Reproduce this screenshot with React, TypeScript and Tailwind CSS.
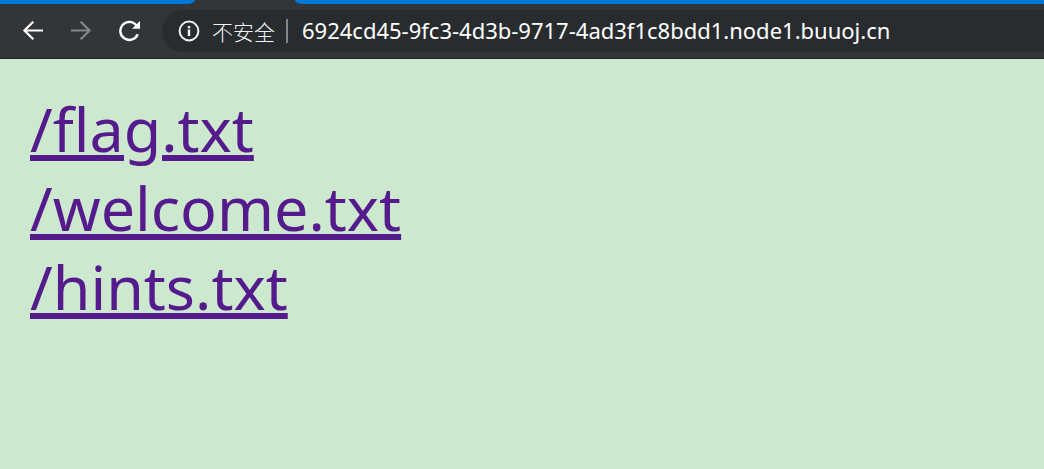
const files = ["/flag.txt", "/welcome.txt", "/hints.txt"];

function BackIcon() {
  return (
    <svg width="22" height="20" viewBox="0 0 22 20" fill="none" stroke="currentColor" strokeWidth="2.2" aria-hidden="true">
      <path d="M21 9.5H2.5M11.3 0.7L2.4 9.5l8.9 8.8" />
    </svg>
  );
}

function ForwardIcon() {
  return (
    <svg width="22" height="20" viewBox="0 0 22 20" fill="none" stroke="currentColor" strokeWidth="2.2" aria-hidden="true">
      <path d="M1 9.5h18.5M10.7 0.7l8.9 8.8-8.9 8.8" />
    </svg>
  );
}

function ReloadIcon() {
  return (
    <svg width="22" height="22" viewBox="0 0 22 22" fill="none" aria-hidden="true">
      <path d="M19.7 14.2a9 9 0 1 1-1.4-9" stroke="currentColor" strokeWidth="2.4" />
      <path d="M22 1v7.8h-8z" fill="currentColor" />
    </svg>
  );
}

function InfoIcon() {
  return (
    <svg width="22" height="22" viewBox="0 0 22 22" fill="none" stroke="currentColor" strokeWidth="2" aria-hidden="true">
      <circle cx="11" cy="11" r="9.4" />
      <path d="M11 9.6v6.4M11 6v2.2" strokeWidth="2.4" />
    </svg>
  );
}

export default function App() {
  return (
    <div className="flex min-h-screen flex-col bg-[#cce8cf]">
      <header className="border-b border-[#25282a] bg-[#323639]">
        <div className="flex h-1">
          <div className="w-[195px] rounded-br-[8px_4px] bg-[#0078d7]" />
          <div className="w-[100px]" />
          <div className="flex-1 rounded-bl-[8px_4px] bg-[#0078d7]" />
        </div>
        <nav aria-label="浏览器" className="flex items-center py-1.5 pl-[22px]">
          <div className="flex w-[140px] shrink-0 items-center gap-[26px]">
            <button type="button" aria-label="后退" className="text-white">
              <BackIcon />
            </button>
            <button type="button" aria-label="前进" className="text-[#848688]" disabled>
              <ForwardIcon />
            </button>
            <button type="button" aria-label="重新加载" className="text-white">
              <ReloadIcon />
            </button>
          </div>
          <div className="flex h-[42px] min-w-0 flex-1 items-center rounded-l-full bg-[#282c2f] pl-4">
            <button
              type="button"
              className="flex shrink-0 items-center gap-3 font-['Noto_Sans_CJK_SC',sans-serif] text-[21px] leading-6 font-light text-[#f1f3f4]"
            >
              <InfoIcon />
              不安全
            </button>
            <span className="ml-[11px] h-6 w-0.5 shrink-0 bg-[#85888a]" />
            <input
              type="text"
              aria-label="地址"
              defaultValue="6924cd45-9fc3-4d3b-9717-4ad3f1c8bdd1.node1.buuoj.cn"
              className="ml-3.5 min-w-0 flex-1 bg-transparent pb-0.5 font-['Noto_Sans',sans-serif] text-[22px] text-white outline-none"
            />
          </div>
        </nav>
      </header>
      <main className="flex flex-col items-start px-[30px] pt-[30px]">
        {files.map((file) => (
          <a
            key={file}
            href={file}
            className="font-['Noto_Sans',sans-serif] text-[61px] leading-[79px] text-[#551a8b] underline decoration-[6px] underline-offset-[3px]"
          >
            {file}
          </a>
        ))}
      </main>
    </div>
  );
}
